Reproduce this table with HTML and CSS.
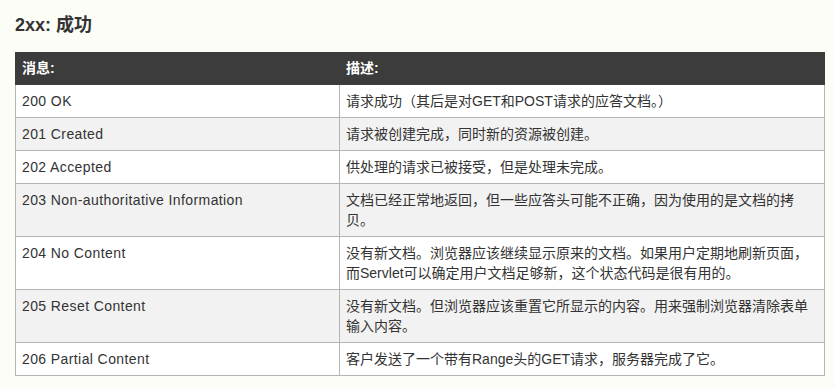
FILE: index.html
```html
<!DOCTYPE html>
<html lang="zh-CN">
<head>
<meta charset="utf-8">
<title>2xx: 成功</title>
<link rel="stylesheet" href="styles.css">
</head>
<body>
<div class="page">
  <h2 class="title">2xx: 成功</h2>
  <table class="codes">
    <thead>
      <tr><th class="col-msg">消息:</th><th>描述:</th></tr>
    </thead>
    <tbody>
      <tr><td class="msg">200 OK</td><td>请求成功（其后是对GET和POST请求的应答文档。）</td></tr>
      <tr><td class="msg">201 Created</td><td>请求被创建完成，同时新的资源被创建。</td></tr>
      <tr><td class="msg">202 Accepted</td><td>供处理的请求已被接受，但是处理未完成。</td></tr>
      <tr><td class="msg">203 Non-authoritative Information</td><td>文档已经正常地返回，但一些应答头可能不正确，因为使用的是文档的拷贝。</td></tr>
      <tr><td class="msg">204 No Content</td><td>没有新文档。浏览器应该继续显示原来的文档。如果用户定期地刷新页面，而Servlet可以确定用户文档足够新，这个状态代码是很有用的。</td></tr>
      <tr><td class="msg">205 Reset Content</td><td>没有新文档。但浏览器应该重置它所显示的内容。用来强制浏览器清除表单输入内容。</td></tr>
      <tr><td class="msg">206 Partial Content</td><td>客户发送了一个带有Range头的GET请求，服务器完成了它。</td></tr>
    </tbody>
  </table>
</div>
</body>
</html>
```
FILE: styles.css
```css
html, body {
  margin: 0;
  padding: 0;
  background: #fdfdf8;
}
body {
  font-family: "Liberation Sans", "Noto Sans CJK SC", sans-serif;
  color: #333;
}
.page {
  padding: 13px 10px 0 15px;
}
.title {
  margin: 0 0 15px 0;
  font-size: 18px;
  line-height: 24px;
  font-weight: bold;
  color: #333;
}
.codes {
  width: 810px;
  border-collapse: collapse;
  font-size: 14px;
  line-height: 20px;
}
.codes th {
  background: #3c3c3c;
  color: #fff;
  font-weight: bold;
  text-align: left;
  padding: 5px 6px 6px;
  border: 1px solid #3c3c3c;
}
.codes .col-msg {
  width: 311px;
}
.codes td {
  padding: 6px 6px;
  vertical-align: top;
  border: 1px solid #b4b4b4;
  background: #fff;
}
.codes td.msg {
  letter-spacing: 0.4px;
}
.codes tbody tr:nth-child(even) td {
  background: #f2f2f2;
}
```
